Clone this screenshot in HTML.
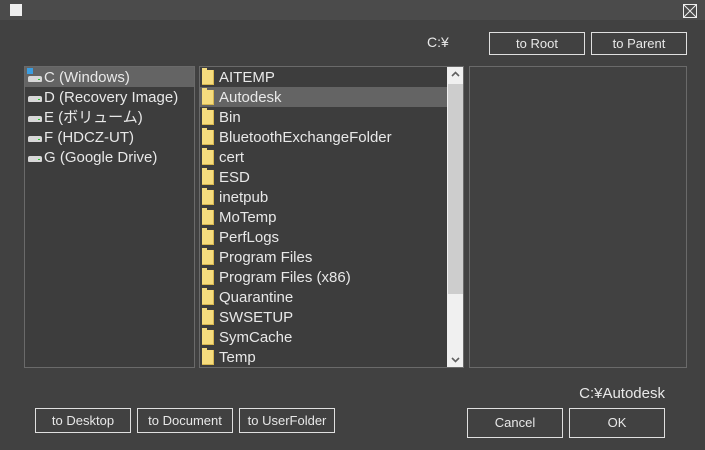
<!DOCTYPE html>
<html><head><meta charset="utf-8"><style>
*{margin:0;padding:0;box-sizing:border-box}
body{width:705px;height:450px;background:#414141;font-family:"Segoe UI","Liberation Sans","Noto Sans CJK JP",sans-serif;color:#e8e8e8;position:relative;overflow:hidden}
.abs{position:absolute}
.title{left:0;top:0;width:705px;height:20px;background:#4b4b4b}
.box{border:1px solid #6a6a6a;background:#3d3d3d}
.row{position:absolute;left:0;height:20px;font-size:15px;line-height:22px;white-space:nowrap}
.sel{background:#646464}
.btn{position:absolute;border:1px solid #e0e0e0;font-size:13px;text-align:center;color:#e8e8e8}
.fold{position:absolute;left:2px;top:3px;width:12px;height:15px;background:#f6dc7e;border-right:1px solid #d8b850;border-bottom:1px solid #d8b850}
.fold:before{content:"";position:absolute;left:0;top:-2px;width:5px;height:2px;background:#f6dc7e}
.drv{position:absolute;left:3px;top:9px;width:14px;height:6px;background:#d8d8d8;border-radius:2px 2px 1px 1px}
.drv:after{content:"";position:absolute;right:2px;top:3px;width:2px;height:1px;background:#3c3}
</style></head><body>
<div class="abs title"></div>
<div class="abs" style="left:10px;top:4px;width:12px;height:12px;background:#efefef"></div>
<svg class="abs" style="left:683px;top:4px" width="14" height="14"><rect x="0.5" y="0.5" width="13" height="13" fill="none" stroke="#eee"/><path d="M1 1L13 13M13 1L1 13" stroke="#eee"/></svg>

<div class="abs" style="left:427px;top:34px;font-size:14px">C:¥</div>
<div class="btn" style="left:489px;top:32px;width:96px;height:23px;line-height:21px">to Root</div>
<div class="btn" style="left:591px;top:32px;width:96px;height:23px;line-height:21px">to Parent</div>

<div class="abs box" style="left:24px;top:66px;width:171px;height:302px">
 <div class="row sel" style="top:0;width:169px;padding-left:19px"><span class="drv"></span><span style="position:absolute;left:2px;top:1px;width:6px;height:6px;background:#3a9de0"></span>C (Windows)</div>
 <div class="row" style="top:20px;padding-left:19px"><span class="drv"></span>D (Recovery Image)</div>
 <div class="row" style="top:40px;padding-left:19px"><span class="drv"></span>E (ボリューム)</div>
 <div class="row" style="top:60px;padding-left:19px"><span class="drv"></span>F (HDCZ-UT)</div>
 <div class="row" style="top:80px;padding-left:19px"><span class="drv"></span>G (Google Drive)</div>
</div>

<div class="abs box" style="left:199px;top:66px;width:265px;height:302px;overflow:hidden">
 <div class="row" style="top:0;padding-left:19px"><span class="fold"></span>AITEMP</div>
 <div class="row sel" style="top:20px;width:247px;padding-left:19px"><span class="fold"></span>Autodesk</div>
 <div class="row" style="top:40px;padding-left:19px"><span class="fold"></span>Bin</div>
 <div class="row" style="top:60px;padding-left:19px"><span class="fold"></span>BluetoothExchangeFolder</div>
 <div class="row" style="top:80px;padding-left:19px"><span class="fold"></span>cert</div>
 <div class="row" style="top:100px;padding-left:19px"><span class="fold"></span>ESD</div>
 <div class="row" style="top:120px;padding-left:19px"><span class="fold"></span>inetpub</div>
 <div class="row" style="top:140px;padding-left:19px"><span class="fold"></span>MoTemp</div>
 <div class="row" style="top:160px;padding-left:19px"><span class="fold"></span>PerfLogs</div>
 <div class="row" style="top:180px;padding-left:19px"><span class="fold"></span>Program Files</div>
 <div class="row" style="top:200px;padding-left:19px"><span class="fold"></span>Program Files (x86)</div>
 <div class="row" style="top:220px;padding-left:19px"><span class="fold"></span>Quarantine</div>
 <div class="row" style="top:240px;padding-left:19px"><span class="fold"></span>SWSETUP</div>
 <div class="row" style="top:260px;padding-left:19px"><span class="fold"></span>SymCache</div>
 <div class="row" style="top:280px;padding-left:19px"><span class="fold"></span>Temp</div>
 <div class="abs" style="left:247px;top:0;width:17px;height:300px;background:#f0f0f0"></div>
 <div class="abs" style="left:248px;top:17px;width:15px;height:210px;background:#cdcdcd"></div>
 <svg class="abs" style="left:250px;top:3px" width="11" height="8"><path d="M2 6L5.5 2.5L9 6" stroke="#606060" stroke-width="1.6" fill="none"/></svg>
 <svg class="abs" style="left:250px;top:289px" width="11" height="8"><path d="M2 2L5.5 5.5L9 2" stroke="#606060" stroke-width="1.6" fill="none"/></svg>
</div>

<div class="abs box" style="left:469px;top:66px;width:218px;height:302px;background:#414141"></div>

<div class="abs" style="left:480px;top:385px;width:185px;text-align:right;font-size:15px">C:¥Autodesk</div>

<div class="btn" style="left:35px;top:408px;width:96px;height:25px;line-height:23px">to Desktop</div>
<div class="btn" style="left:137px;top:408px;width:96px;height:25px;line-height:23px">to Document</div>
<div class="btn" style="left:239px;top:408px;width:96px;height:25px;line-height:23px">to UserFolder</div>
<div class="btn" style="left:467px;top:408px;width:96px;height:30px;line-height:28px">Cancel</div>
<div class="btn" style="left:569px;top:408px;width:96px;height:30px;line-height:28px">OK</div>
</body></html>
